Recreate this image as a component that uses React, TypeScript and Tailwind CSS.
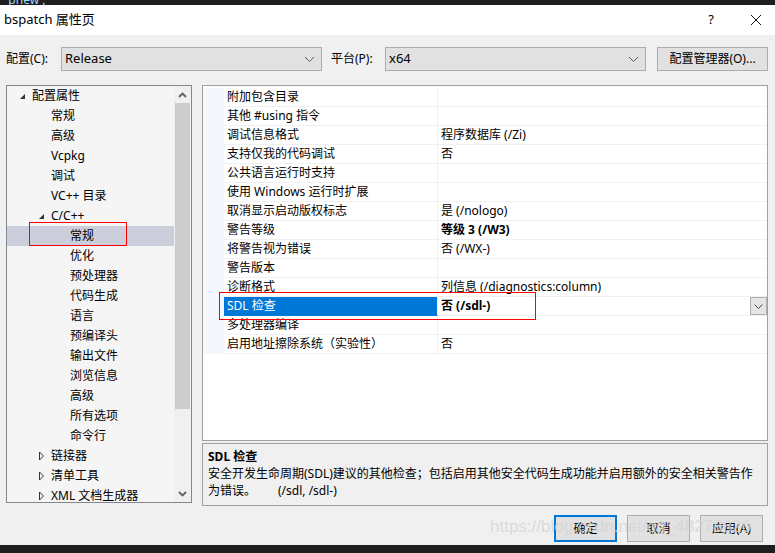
import React from "react";

const FONT = '"Noto Sans", "Noto Sans CJK SC", sans-serif';

type TreeItem = { label: string; level: number; exp?: "open" | "closed"; selected?: boolean };

const tree: TreeItem[] = [
  { label: "配置属性", level: 0, exp: "open" },
  { label: "常规", level: 1 },
  { label: "高级", level: 1 },
  { label: "Vcpkg", level: 1 },
  { label: "调试", level: 1 },
  { label: "VC++ 目录", level: 1 },
  { label: "C/C++", level: 1, exp: "open" },
  { label: "常规", level: 2, selected: true },
  { label: "优化", level: 2 },
  { label: "预处理器", level: 2 },
  { label: "代码生成", level: 2 },
  { label: "语言", level: 2 },
  { label: "预编译头", level: 2 },
  { label: "输出文件", level: 2 },
  { label: "浏览信息", level: 2 },
  { label: "高级", level: 2 },
  { label: "所有选项", level: 2 },
  { label: "命令行", level: 2 },
  { label: "链接器", level: 1, exp: "closed" },
  { label: "清单工具", level: 1, exp: "closed" },
  { label: "XML 文档生成器", level: 1, exp: "closed" },
];

type Row = { name: string; value: string; bold?: boolean; selected?: boolean };
const rows: Row[] = [
  { name: "附加包含目录", value: "" },
  { name: "其他 #using 指令", value: "" },
  { name: "调试信息格式", value: "程序数据库 (/Zi)" },
  { name: "支持仅我的代码调试", value: "否" },
  { name: "公共语言运行时支持", value: "" },
  { name: "使用 Windows 运行时扩展", value: "" },
  { name: "取消显示启动版权标志", value: "是 (/nologo)" },
  { name: "警告等级", value: "等级 3 (/W3)", bold: true },
  { name: "将警告视为错误", value: "否 (/WX-)" },
  { name: "警告版本", value: "" },
  { name: "诊断格式", value: "列信息 (/diagnostics:column)" },
  { name: "SDL 检查", value: "否 (/sdl-)", bold: true, selected: true },
  { name: "多处理器编译", value: "" },
  { name: "启用地址擦除系统（实验性）", value: "否" },
];

function Chevron({ className = "" }: { className?: string }) {
  return (
    <svg width="11" height="7" viewBox="0 0 11 7" className={className}>
      <path d="M1 1 L5.5 5.5 L10 1" fill="none" stroke="#5a5a5a" strokeWidth="1" />
    </svg>
  );
}

function Expander({ kind }: { kind: "open" | "closed" }) {
  if (kind === "open") {
    return (
      <svg width="7" height="7" viewBox="0 0 7 7">
        <path d="M6 1 L6 6 L1 6 Z" fill="#333" />
      </svg>
    );
  }
  return (
    <svg width="7" height="10" viewBox="0 0 7 10">
      <path d="M1.5 1 L5.5 5 L1.5 9 Z" fill="none" stroke="#333" strokeWidth="1" />
    </svg>
  );
}

function Combo({ value, width }: { value: string; width: string }) {
  return (
    <div className={`${width} h-[24px] bg-[#e1e1e1] border border-[#adadad] flex items-center justify-between pl-[3px] pr-[6px]`}>
      <span className="text-[13px] text-black">{value}</span>
      <Chevron />
    </div>
  );
}

export default function App() {
  return (
    <div className="w-[775px] h-[553px] flex flex-col bg-[#f0f0f0] overflow-hidden relative text-black" style={{ fontFamily: FONT }}>
      {/* top dark strip */}
      <div className="h-[5px] bg-[#1e1e1e] overflow-hidden">
        <div className="pl-[6px] -mt-[9px] text-[12px] text-[#9cdcfe]">'pnew',</div>
      </div>
      {/* title bar */}
      <div className="h-[30px] bg-white flex items-center">
        <span className="pl-[4px] text-[13px] flex-1">bspatch 属性页</span>
        <span className="text-[13px] mr-[36px]">?</span>
        <svg width="12" height="12" viewBox="0 0 12 12" className="mr-[13px]">
          <path d="M1 1 L11 11 M11 1 L1 11" stroke="#111" strokeWidth="1" />
        </svg>
      </div>
      {/* config row */}
      <div className="flex items-center pt-[12px] h-[36px]">
        <span className="ml-[6px] w-[55px] text-[12px]">配置(C):</span>
        <Combo value="Release" width="w-[261px]" />
        <span className="ml-[9px] w-[54px] text-[12px]">平台(P):</span>
        <Combo value="x64" width="w-[261px]" />
        <div className="ml-[11px] w-[111px] h-[24px] bg-[#e1e1e1] border border-[#adadad] flex items-center justify-center text-[12px]">
          配置管理器(O)...
        </div>
      </div>
      {/* panels */}
      <div className="flex mt-[14px] ml-[6px]">
        {/* tree */}
        <div className="w-[186px] h-[418px] border border-[#828790] bg-[#f5f5f5] flex">
          <div className="flex-1 flex flex-col overflow-hidden">
            {tree.map((t, i) => {
              const pad =
                t.level === 0 ? "pl-[12px]" : t.level === 1 ? (t.exp ? "pl-[31px]" : "pl-[44px]") : "pl-[63px]";
              return (
                <div
                  key={i}
                  className={`relative h-[20px] shrink-0 flex items-center ${pad} ${t.selected ? "bg-[#cccedb]" : ""}`}
                >
                  {t.exp && (
                    <span className="w-[13px] flex items-center">
                      <Expander kind={t.exp} />
                    </span>
                  )}
                  <span className="text-[12px] whitespace-nowrap">{t.label}</span>
                  {t.selected && (
                    <div className="absolute left-[22px] top-[-4px] w-[98px] h-[24px] border border-[#ff0000]" />
                  )}
                </div>
              );
            })}
          </div>
          {/* scrollbar */}
          <div className="w-[17px] bg-[#f0f0f0] flex flex-col items-center">
            <div className="h-[17px] w-full flex items-center justify-center">
              <svg width="9" height="6" viewBox="0 0 9 6">
                <path d="M1 5 L4.5 1.5 L8 5" fill="none" stroke="#606060" strokeWidth="1.8" />
              </svg>
            </div>
            <div className="w-[15px] h-[306px] bg-[#cdcdcd]" />
            <div className="flex-1" />
            <div className="h-[17px] w-full flex items-center justify-center">
              <svg width="9" height="6" viewBox="0 0 9 6">
                <path d="M1 1 L4.5 4.5 L8 1" fill="none" stroke="#606060" strokeWidth="1.8" />
              </svg>
            </div>
          </div>
        </div>
        {/* right side */}
        <div className="ml-[10px] w-[566px] flex flex-col">
          <div className="relative h-[356px] border border-[#a0a0a0] bg-white flex flex-col pt-[2px]">
            {rows.map((r, i) => (
              <div key={i} className="h-[19px] flex shrink-0">
                <div className="w-[21px] bg-[#f4f7fb]" />
                <div
                  className={`w-[214px] border-b border-r border-[#f0f0f0] flex items-center pl-[3px] text-[12px] whitespace-nowrap ${
                    r.selected ? "bg-[#0078d7] text-white border-b-[#0078d7]" : ""
                  }`}
                >
                  {r.name}
                </div>
                <div className="flex-1 border-b border-[#f0f0f0] flex items-center justify-between pl-[3px] text-[12px] whitespace-nowrap">
                  <span className={r.bold ? "font-bold" : ""}>{r.value}</span>
                  {r.selected && (
                    <div className="w-[17px] h-[18px] bg-[#e5e5e5] border border-[#adadad] flex items-center justify-center">
                      <svg width="9" height="5" viewBox="0 0 9 5">
                        <path d="M0.5 0.5 L4.5 4.5 L8.5 0.5" fill="none" stroke="#444" strokeWidth="1" />
                      </svg>
                    </div>
                  )}
                </div>
              </div>
            ))}
            <div className="absolute left-[16px] top-[206px] w-[317px] h-[28px] border border-[#ff0000]" />
          </div>
          <div className="mt-[2px] h-[63px] border border-[#a0a0a0] bg-[#f0f0f0] px-[5px] pt-[4px] flex flex-col text-[12px] leading-[17px]">
            <span className="font-bold">SDL 检查</span>
            <span className="whitespace-nowrap">安全开发生命周期(SDL)建议的其他检查；包括启用其他安全代码生成功能并启用额外的安全相关警告作</span>
            <span className="whitespace-nowrap">
              为错误。<span className="ml-[22px]">(/sdl, /sdl-)</span>
            </span>
          </div>
          <div className="flex justify-end mt-[9px] mr-[5px] gap-[10px]">
            <div className="w-[63px] h-[27px] bg-[#e1e1e1] border-2 border-[#0078d7] flex items-center justify-center text-[12px]">确定</div>
            <div className="w-[63px] h-[27px] bg-[#e1e1e1] border border-[#adadad] flex items-center justify-center text-[12px]">取消</div>
            <div className="w-[63px] h-[27px] bg-[#e1e1e1] border border-[#adadad] flex items-center justify-center text-[12px]">应用(A)</div>
          </div>
        </div>
      </div>
      <div className="flex-1" />
      <div className="h-[8px] bg-[#1e1e1e]" />
      {/* watermark */}
      <div className="absolute left-[490px] top-[514px] text-[17px] text-[#d4d4d4]/80 whitespace-nowrap pointer-events-none" style={{ fontFamily: '"Liberation Sans", sans-serif' }}>
        https://blog.csdn.net/qq_48278826
      </div>
    </div>
  );
}
